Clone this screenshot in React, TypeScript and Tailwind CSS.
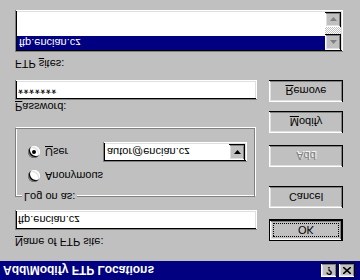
import React from "react";

// win95 bevels
const raised =
  "shadow-[inset_-1px_-1px_0_#000,inset_1px_1px_0_#fff,inset_-2px_-2px_0_#808080,inset_2px_2px_0_#dfdfdf]";
const sunken =
  "shadow-[inset_1px_1px_0_#808080,inset_-1px_-1px_0_#fff,inset_2px_2px_0_#000,inset_-2px_-2px_0_#dfdfdf]";

const Button: React.FC<{ children: React.ReactNode; disabled?: boolean; isDefault?: boolean; className?: string }> = ({
  children,
  disabled,
  isDefault,
  className = "",
}) => {
  if (isDefault) {
    return (
      <div className={`${className} w-[74px] h-[22px] border border-black bg-[#c0c0c0]`}>
        <div className={`relative h-full w-full ${raised} flex items-center justify-center text-black`}>
          <div className="absolute inset-[3px] border border-dotted border-black" />
          {children}
        </div>
      </div>
    );
  }
  return (
    <div
      className={`${className} w-[74px] h-[22px] bg-[#c0c0c0] ${raised} flex items-center justify-center ${
        disabled ? "text-[#808080] [text-shadow:1px_1px_0_#fff]" : "text-black"
      }`}
    >
      {children}
    </div>
  );
};

const Radio: React.FC<{ checked?: boolean }> = ({ checked }) => (
  <div className="w-[12px] h-[12px] rounded-full bg-white shadow-[inset_1px_1px_0_#808080,inset_2px_2px_0_#000,inset_-1px_-1px_0_#fff,inset_-2px_-2px_0_#dfdfdf] flex items-center justify-center">
    {checked && <div className="w-[4px] h-[4px] rounded-full bg-black" />}
  </div>
);

const Arrow: React.FC<{ up?: boolean; disabled?: boolean }> = ({ up, disabled }) => (
  <svg width="7" height="4" viewBox="0 0 7 4">
    <polygon
      points={up ? "3.5,0 7,4 0,4" : "0,0 7,0 3.5,4"}
      fill={disabled ? "#808080" : "#000"}
    />
  </svg>
);

export default function App() {
  return (
    <div className="w-[360px] h-[280px] overflow-hidden bg-[#c0c0c0] -scale-y-100 flex flex-col font-['Liberation_Sans',Arial,sans-serif] text-[11px] text-black">
      {/* title bar */}
      <div className="h-[19px] bg-[#000080] flex items-center pl-[3px] pr-[5px]">
        <span className="flex-1 text-white font-bold text-[12px] leading-none">Add/Modify FTP Locations</span>
        <div className="flex gap-[2px]">
          <div className={`w-[16px] h-[14px] bg-[#c0c0c0] ${raised} flex items-center justify-center font-bold text-[11px] leading-none`}>
            ?
          </div>
          <div className={`w-[16px] h-[14px] bg-[#c0c0c0] ${raised} flex items-center justify-center`}>
            <svg width="8" height="7" viewBox="0 0 8 7">
              <path d="M0 0 L8 7 M8 0 L0 7" stroke="#000" strokeWidth="1.6" />
            </svg>
          </div>
        </div>
      </div>

      <div className="flex pl-[15px] pt-[12px]">
        <div className="w-[242px] flex flex-col">
          <div className="h-[14px] leading-[14px]">
            <u>N</u>ame of FTP site:
          </div>
          <div className={`mt-[5px] h-[20px] bg-white ${sunken} flex items-center pl-[3px]`}>ftp.encian.cz</div>

          <div className="relative mt-[13px] h-[69px] w-[240px] border border-[#808080] shadow-[inset_1px_1px_0_#fff,1px_1px_0_#fff]">
            <span className="absolute -top-[7px] left-[6px] bg-[#c0c0c0] px-[2px] leading-[13px]">Log on as:</span>
            <div className="flex flex-col pt-[12px] pl-[12px]">
              <div className="h-[16px] flex items-center gap-[5px]">
                <Radio />
                <span>Anonymous</span>
              </div>
              <div className="mt-[6px] h-[20px] flex items-center">
                <div className="w-[75px] flex items-center gap-[5px]">
                  <Radio checked />
                  <span>
                    <u>U</u>ser
                  </span>
                </div>
                <div className={`w-[144px] h-[20px] bg-white ${sunken} flex items-center p-[2px]`}>
                  <span className="flex-1 pl-[2px]">autor@encian.cz</span>
                  <div className={`w-[16px] h-[16px] bg-[#c0c0c0] ${raised} flex items-center justify-center`}>
                    <Arrow />
                  </div>
                </div>
              </div>
            </div>
          </div>

          <div className="mt-[15px] h-[13px] leading-[13px]">
            <u>P</u>assword:
          </div>
          <div className={`h-[20px] bg-white ${sunken} flex items-center pl-[3px] text-[13px] leading-none tracking-[0.5px]`}>
            *******
          </div>
        </div>

        <div className="ml-[12px] w-[74px] flex flex-col pt-[8px]">
          <Button isDefault>OK</Button>
          <Button className="mt-[11px]">Cancel</Button>
          <Button className="mt-[19px]" disabled>
            Add
          </Button>
          <Button className="mt-[12px]">
            <span>
              <u>M</u>odify
            </span>
          </Button>
          <Button className="mt-[9px]">
            <span>
              <u>R</u>emove
            </span>
          </Button>
        </div>
      </div>

      <div className="pl-[15px] mt-[9px] flex flex-col">
        <div className="h-[14px] leading-[14px]">
          FTP <u>s</u>ites:
        </div>
        <div className={`mt-[5px] w-[328px] h-[42px] bg-white ${sunken} flex p-[2px]`}>
          <div className="flex-1">
            <div className="h-[14px] bg-[#000080] text-white flex items-center pl-[2px]">ftp.encian.cz</div>
          </div>
          <div className="w-[16px] flex flex-col">
            <div className={`h-[16px] bg-[#c0c0c0] ${raised} flex items-center justify-center`}>
              <Arrow up disabled />
            </div>
            <div className="flex-1 bg-[image:repeating-conic-gradient(#c0c0c0_0_25%,#fff_0_50%)] bg-[length:2px_2px]" />
            <div className={`h-[15px] bg-[#c0c0c0] ${raised} flex items-center justify-center`}>
              <Arrow disabled />
            </div>
          </div>
        </div>
      </div>
    </div>
  );
}
